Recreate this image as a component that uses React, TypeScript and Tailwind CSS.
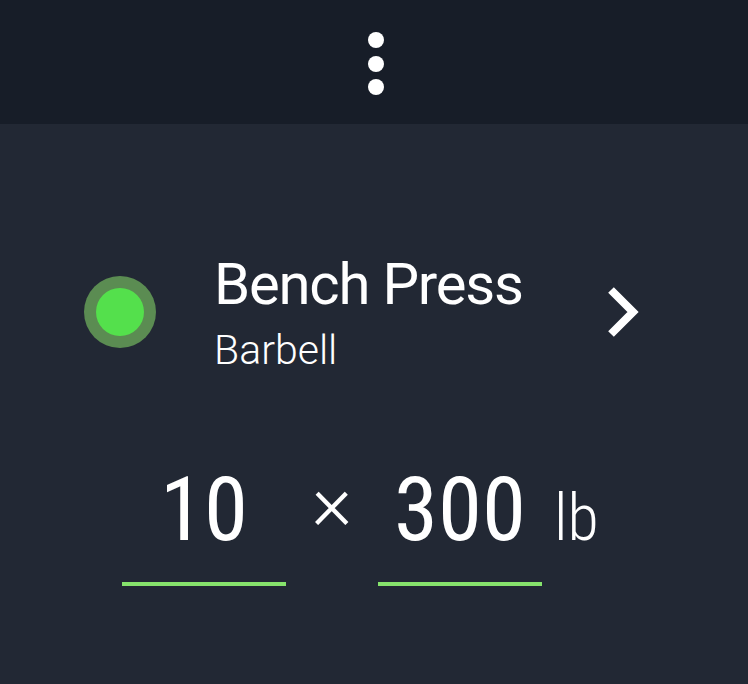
export default function App() {
  return (
    <div className="w-[748px] h-[684px] bg-[#222834] font-['Roboto',sans-serif] text-white overflow-hidden">
      {/* Top bar with overflow menu */}
      <div className="h-[124px] bg-[#171d28] flex items-center justify-center pt-[3px] pl-[4px]">
        <div className="flex flex-col gap-[7.5px]">
          <div className="w-4 h-4 rounded-full bg-white" />
          <div className="w-4 h-4 rounded-full bg-white" />
          <div className="w-4 h-4 rounded-full bg-white" />
        </div>
      </div>

      {/* Exercise row */}
      <div className="mt-[131px] flex items-center pl-[84px] pr-[100px]">
        <div className="w-[72px] h-[72px] rounded-full bg-[#5b8c52] flex items-center justify-center shrink-0">
          <div className="w-12 h-12 rounded-full bg-[#54e04c]" />
        </div>
        <div className="ml-[58px] flex-1 flex flex-col">
          <span className="text-[58px] leading-[58px] tracking-[-1.2px]">Bench Press</span>
          <span className="mt-[19px] text-[41px] leading-[36px] font-light">Barbell</span>
        </div>
        <svg width="48" height="60" viewBox="600 284 48 60" className="shrink-0">
          <path d="M611 292 L633 314 L611 336" fill="none" stroke="white" strokeWidth="8" strokeLinejoin="miter" />
        </svg>
      </div>

      {/* Reps x weight */}
      <div className="mt-[97px] flex items-baseline pl-[122px]">
        <div className="w-[164px] flex flex-col items-center">
          <span className="text-[89px] leading-[90px] [font-stretch:75%]">10</span>
          <div className="mt-[27px] w-full h-1 bg-[#86e36c]" />
        </div>
        <span className="w-[92px] text-center text-[78px] leading-[60px] font-light -translate-y-[11px]">×</span>
        <div className="w-[164px] flex flex-col items-center">
          <span className="text-[89px] leading-[90px] [font-stretch:75%]">300</span>
          <div className="mt-[27px] w-full h-1 bg-[#86e36c]" />
        </div>
        <span className="ml-[12px] text-[64px] leading-[64px] font-light [font-stretch:75%]">lb</span>
      </div>
    </div>
  );
}
